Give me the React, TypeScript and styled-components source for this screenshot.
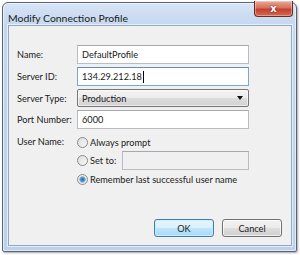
import styled, { createGlobalStyle } from 'styled-components'

const GlobalStyle = createGlobalStyle`
  html, body {
    margin: 0;
    padding: 0;
    background: #ffffff;
  }
  body {
    font-family: "Lato", "Noto Sans", sans-serif;
    font-size: 9.2px;
    color: #1a1a1a;
  }
`

const Page = styled.div`
  padding: 2px 0 0 2px;
  width: 300px;
  height: 255px;
  box-sizing: border-box;
`
const Window = styled.div`
  width: 295px;
  height: 250px;
  box-sizing: border-box;
  border: 1px solid #5b6575;
  border-radius: 6px 6px 2px 2px;
  background: linear-gradient(180deg, #d6e4f5 0px, #c3d7ef 24px, #bcd1eb 100%);
  box-shadow: 1px 1px 2px rgba(0, 0, 0, 0.35), inset 0 0 0 1px rgba(255, 255, 255, 0.55);
  display: flex;
  flex-direction: column;
`
const TitleBar = styled.div`
  height: 22px;
  display: flex;
  align-items: flex-start;
  justify-content: space-between;
  padding: 0 3px 0 5px;
`
const Title = styled.div`
  font-size: 10.4px;
  line-height: 12px;
  margin-top: 9px;
  color: #1a1a1a;
`
const CloseButton = styled.div`
  width: 39px;
  height: 16px;
  margin-top: -2px;
  box-sizing: border-box;
  border: 1px solid #6b2a22;
  border-top: none;
  border-radius: 0 0 4px 4px;
  background: linear-gradient(180deg, #e9a99b 0%, #d6705f 45%, #c2402f 55%, #d56a50 100%);
  box-shadow: inset 0 0 0 1px rgba(255, 255, 255, 0.35);
  color: #ffffff;
  font-family: "DejaVu Sans", sans-serif;
  font-weight: bold;
  font-size: 10px;
  line-height: 15px;
  text-align: center;
  text-shadow: 0 0 2px #5a1010;
`
const Client = styled.div`
  flex: 1;
  margin: 0 4px 5px 5px;
  border: 1px solid #8fa8c6;
  background: #f0f0f0;
  box-shadow: 0 0 0 1px rgba(255, 255, 255, 0.6);
  display: flex;
  flex-direction: column;
  padding: 19px 9px 8px 8px;
`
const Form = styled.div`
  display: grid;
  grid-template-columns: 60px 172px;
  row-gap: 3px;
  align-items: center;
`
const Label = styled.div<{ $top?: boolean }>`
  align-self: ${p => (p.$top ? 'start' : 'center')};
  margin-top: ${p => (p.$top ? '4px' : '0')};
  white-space: nowrap;
`
const TextBox = styled.div<{ $focused?: boolean; $disabled?: boolean; $width?: number }>`
  height: 19px;
  width: ${p => (p.$width ? `${p.$width}px` : 'auto')};
  box-sizing: border-box;
  border: 1px solid ${p => (p.$focused ? '#7ea6cf' : '#b9bcc2')};
  border-top-color: ${p => (p.$focused ? '#5f8fc0' : '#a5a8ae')};
  background: ${p => (p.$disabled ? '#f0f0f0' : '#ffffff')};
  padding: 0 4px;
  line-height: 17px;
  display: flex;
  align-items: center;
`
const Caret = styled.span`
  display: inline-block;
  width: 1px;
  height: 12px;
  background: #000;
  margin-left: 1px;
`
const Select = styled.div`
  height: 18px;
  box-sizing: border-box;
  border: 1px solid #767676;
  border-radius: 2px;
  background: linear-gradient(180deg, #f4f4f4 0%, #ebebeb 50%, #dddddd 51%, #d2d2d2 100%);
  box-shadow: inset 0 0 0 1px rgba(255, 255, 255, 0.6);
  padding: 0 4px;
  display: flex;
  align-items: center;
  justify-content: space-between;
`
const Arrow = styled.span`
  width: 0;
  height: 0;
  border-left: 3.5px solid transparent;
  border-right: 3.5px solid transparent;
  border-top: 4px solid #111;
  margin-right: 1px;
`
const RadioList = styled.div`
  display: flex;
  flex-direction: column;
  margin-top: 1px;
  gap: 0.5px;
`
const RadioRow = styled.div`
  height: 18px;
  display: flex;
  align-items: center;
  gap: 2px;
  white-space: nowrap;
`
const Radio = styled.span<{ $checked?: boolean }>`
  width: 11px;
  height: 11px;
  box-sizing: border-box;
  border-radius: 50%;
  border: 1px solid #8a8a8a;
  background: ${p =>
    p.$checked
      ? 'radial-gradient(circle, #2d6fa8 0, #4b94cc 2px, #8fc2e6 3px, #e9e9e9 3.6px, #f6f6f6 100%)'
      : 'linear-gradient(135deg, #dcdcdc 0%, #f8f8f8 100%)'};
  flex-shrink: 0;
`
const SetToLabel = styled.span`
  width: 31px;
`
const ButtonRow = styled.div`
  margin-top: auto;
  display: flex;
  justify-content: flex-end;
  gap: 8px;
`
const Button = styled.div<{ $primary?: boolean }>`
  width: 60px;
  height: 18px;
  box-sizing: border-box;
  border-radius: 3px;
  border: 1px solid ${p => (p.$primary ? '#3c7fb1' : '#707070')};
  background: ${p =>
    p.$primary
      ? 'linear-gradient(180deg, #eaf6fd 0%, #d9f0fc 50%, #bee6fd 51%, #a7d9f5 100%)'
      : 'linear-gradient(180deg, #f2f2f2 0%, #ebebeb 50%, #dddddd 51%, #cfcfcf 100%)'};
  box-shadow: inset 0 0 0 1px ${p => (p.$primary ? 'rgba(200, 240, 255, 0.9)' : 'rgba(255, 255, 255, 0.7)')};
  display: flex;
  align-items: center;
  justify-content: center;
`

export default function App() {
  return (
    <Page>
      <GlobalStyle />
      <Window>
        <TitleBar>
          <Title>Modify Connection Profile</Title>
          <CloseButton>x</CloseButton>
        </TitleBar>
        <Client>
          <Form>
            <Label>Name:</Label>
            <TextBox>DefaultProfile</TextBox>
            <Label>Server ID:</Label>
            <TextBox $focused>
              134.29.212.18
              <Caret />
            </TextBox>
            <Label>Server Type:</Label>
            <Select>
              Production
              <Arrow />
            </Select>
            <Label>Port Number:</Label>
            <TextBox>6000</TextBox>
            <Label $top>User Name:</Label>
            <RadioList>
              <RadioRow>
                <Radio />
                Always prompt
              </RadioRow>
              <RadioRow>
                <Radio />
                <SetToLabel>Set to:</SetToLabel>
                <TextBox $disabled $width={130} />
              </RadioRow>
              <RadioRow>
                <Radio $checked />
                Remember last successful user name
              </RadioRow>
            </RadioList>
          </Form>
          <ButtonRow>
            <Button $primary>OK</Button>
            <Button>Cancel</Button>
          </ButtonRow>
        </Client>
      </Window>
    </Page>
  )
}
